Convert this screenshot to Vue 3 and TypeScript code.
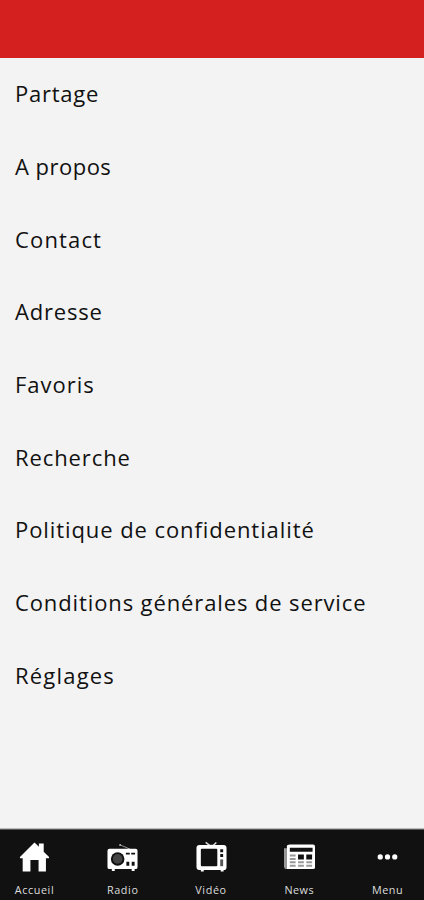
<script setup lang="ts">
interface MenuEntry {
  label: string
  spacing: number
}

interface Tab {
  id: string
  label: string
  spacing: number
}

const entries: MenuEntry[] = [
  { label: 'Partage', spacing: 0.75 },
  { label: 'A propos', spacing: 0.48 },
  { label: 'Contact', spacing: 1.15 },
  { label: 'Adresse', spacing: 0.8 },
  { label: 'Favoris', spacing: 1 },
  { label: 'Recherche', spacing: 0.9 },
  { label: 'Politique de confidentialité', spacing: 0.92 },
  { label: 'Conditions générales de service', spacing: 0.88 },
  { label: 'Réglages', spacing: 1.2 },
]

const tabs: Tab[] = [
  { id: 'home', label: 'Accueil', spacing: 0.6 },
  { id: 'radio', label: 'Radio', spacing: 0.6 },
  { id: 'video', label: 'Vidéo', spacing: 0.6 },
  { id: 'news', label: 'News', spacing: 0.5 },
  { id: 'menu', label: 'Menu', spacing: 0.5 },
]
</script>

<template>
  <div class="screen">
    <header class="header"></header>
    <main class="list">
      <a v-for="e in entries" :key="e.label" class="row">
        <span :style="{ letterSpacing: e.spacing + 'px' }">{{ e.label }}</span>
      </a>
    </main>
    <nav class="tabs">
      <a v-for="t in tabs" :key="t.id" class="tab">
        <svg v-if="t.id === 'home'" class="icon" viewBox="0 0 32 32">
          <path fill="#fff" d="M16 1.500 20.500 6V2.500h5V11L31 16.500v1.200h-3.200V31.500h-7.600V19.500h-8.400v12H3.800V17.700H1v-1.200Z" />
        </svg>
        <svg v-else-if="t.id === 'radio'" class="icon" viewBox="0 0 32 32">
          <path d="M13.500 4 24 8.500" stroke="#999" stroke-width="1" />
          <circle cx="13.500" cy="4" r="1" fill="#bbb" />
          <path fill="#fff" d="M2.500 8h27q2 0 2 2v17q0 2-2 2h-1v2h-3v-2H8v2H5v-2H2.500q-2 0-2-2V10q0-2 2-2Z" />
          <circle cx="11" cy="18.500" r="7" fill="#111" />
          <circle cx="11" cy="18.500" r="5" fill="#444" />
          <path fill="#111" d="M19.500 12h4v2h-4zM25 12h4v2h-4zM20 21.500h3v4h-3zM25.500 21.500h3v4h-3z" />
        </svg>
        <svg v-else-if="t.id === 'video'" class="icon" viewBox="0 0 32 32">
          <path d="M10 1.500 14 4.500h4L21 1.500" fill="none" stroke="#ddd" stroke-width="1.500" />
          <path fill="#fff" d="M3.500 4h25q3 0 3 3v20q0 3-3 3v1.500h-3V30H8v1.500H5V30q-4.500 0-4.500-3V7q0-3 3-3Z" />
          <rect x="5" y="8" width="17" height="18" rx="1" fill="#111" />
          <path fill="#111" d="M25 8.500h3v3h-3zM25 13.500h3v3h-3z" />
          <path fill="#555" d="M25 19h3v7h-3z" />
        </svg>
        <svg v-else-if="t.id === 'news'" class="icon" viewBox="0 0 32 32">
          <path fill="#999" d="M0 7.500h3v21.500q-3 0-3-3Z" />
          <path fill="#fff" d="M6 3.500h24q2 0 2 2V27q0 2-2 2H3V5.500q0-2 3-2Z" />
          <path fill="#111" d="M6 7h23.500v4H6zM14.500 14h6v5h-6zM23 14h6v5h-6z" />
          <path fill="#999" d="M6 14h6v2H6zM6 17.500h6v2H6zM6 21h6v2H6zM6 24.500h6v2H6zM14.500 21h6v2h-6zM14.500 24.500h6v2h-6zM23 21h6v2h-6zM23 24.500h6v2h-6z" />
        </svg>
        <svg v-else class="icon" viewBox="0 0 32 32">
          <circle cx="8.500" cy="16.500" r="2.700" fill="#fff" />
          <circle cx="16" cy="16.500" r="2.700" fill="#fff" />
          <circle cx="23.500" cy="16.500" r="2.700" fill="#fff" />
        </svg>
        <span class="label" :style="{ letterSpacing: t.spacing + 'px' }">{{ t.label }}</span>
      </a>
    </nav>
  </div>
</template>

<style>
body {
  margin: 0;
}
</style>

<style scoped>
.screen {
  display: flex;
  flex-direction: column;
  width: 424px;
  height: 900px;
  overflow: hidden;
  background: #f3f3f3;
  font-family: 'Open Sans', 'Noto Sans', sans-serif;
}
.header {
  flex: none;
  height: 58px;
  background: #d52020;
}
.list {
  box-sizing: border-box;
  flex: 1;
  min-height: 0;
  border-bottom: 1px solid #bbb;
}
.row {
  box-sizing: border-box;
  display: flex;
  align-items: center;
  height: 72.7px;
  padding: 0 0 2.4px 15px;
  color: #111;
  font-size: 22px;
  line-height: 30px;
  white-space: nowrap;
}
.tabs {
  box-sizing: border-box;
  flex: none;
  display: flex;
  justify-content: space-between;
  height: 71px;
  padding: 11px 16px 0 14px;
  border-top: 1px solid #555;
  background: #111;
}
.tab {
  display: flex;
  flex-direction: column;
  align-items: center;
  width: 41px;
}
.icon {
  flex: none;
  width: 31px;
  height: 31px;
}
.label {
  margin-top: 11px;
  color: #ddd;
  font-size: 10.8px;
  line-height: 14px;
  white-space: nowrap;
}
</style>
